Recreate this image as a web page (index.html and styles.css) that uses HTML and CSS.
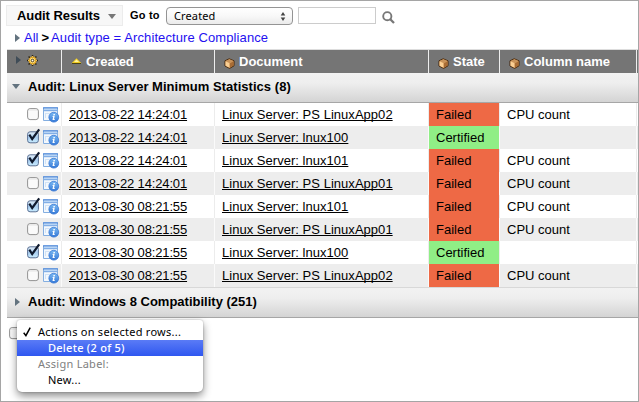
FILE: index.html
```
<!DOCTYPE html>
<html lang="en">
<head>
<meta charset="utf-8">
<title>Audit Results</title>
<link rel="stylesheet" href="styles.css">
</head>
<body>
<svg class="defs" width="0" height="0">
  <defs>
    <linearGradient id="ball" x1="0" y1="0" x2="0" y2="1"><stop offset="0" stop-color="#7dbbf3"/><stop offset="1" stop-color="#3377d6"/></linearGradient>
    <linearGradient id="blue" x1="0" y1="0" x2="0" y2="1"><stop offset="0" stop-color="#e4f0fa"/><stop offset=".5" stop-color="#a9cdf0"/><stop offset="1" stop-color="#c8ecff"/></linearGradient>
  </defs>
  <symbol id="box" viewBox="0 0 11 11"><path d="M5.2.8 10 2.8v5L5.6 10.4 1 8V2.8z" fill="#d9a15f" stroke="#42250c" stroke-width="1"/><path d="M1.5 3 5.5 1.3 9.6 3 5.6 5z" fill="#c9935a"/><path d="M1.5 3.3 5.5 5.2v4.6L1.5 7.8z" fill="#fbcf94"/><path d="M5.8 5.2 9.6 3.3v4.3L5.8 9.8z" fill="#a86c35"/></symbol>
  <symbol id="info" viewBox="0 0 17 16"><path d="M.5 1h14v12.500H.5z" fill="#f3f8fd" stroke="#84aee0"/><path d="M0 .3h15v1.300H0z" fill="#4a86d8"/><path d="M1 1.600h13v1.600H1z" fill="#b8d5f5"/><path d="M1 3.700h13" stroke="#6a9ee0"/><path d="M3 6.500h7M2.500 6v5" stroke="#d0e2f6" fill="none"/><circle cx="10.800" cy="10.200" r="4.900" fill="url(#ball)" stroke="#3b7ad4" stroke-width=".8"/><path d="M10.500 7h1.500l-.3 1.400h-1.500zM9.700 9.100h2l-.6 3h.7l-.2.9H9.500l.6-3h-.6z" fill="#fff"/></symbol>
  <symbol id="off" viewBox="0 0 13 13"><rect x=".6" y=".6" width="10.800" height="11" rx="2.500" fill="#fafafa" stroke="#929292"/><path d="M2 2h8" stroke="#e4e4e4"/></symbol>
  <symbol id="on" viewBox="0 0 13 13"><rect x=".6" y=".8" width="10.800" height="11" rx="2.500" fill="url(#blue)" stroke="#5b7093"/><path d="M2.300 3.600 5.200 8 12.200-1.600" fill="none" stroke="#101a2e" stroke-width="2.200"/></symbol>
</svg>
<main class="frame">
  <header class="toolbar">
    <div class="title"><span>Audit Results</span><i class="down grey"></i></div>
    <label class="goto">Go to</label>
    <div class="select"><span>Created</span>
      <svg width="6" height="9" viewBox="0 0 6 9"><path d="M3 0 5.300 3.500H.7zM3 9 .7 5.500h4.600z" fill="#444"/></svg></div>
    <div class="search"></div>
    <svg class="glass" width="13" height="13" viewBox="0 0 13 13"><circle cx="5.300" cy="5.200" r="4.100" fill="none" stroke="#777" stroke-width="1.900"/><path d="m8.300 8.300 3.700 3.700" stroke="#777" stroke-width="2.300"/></svg>
  </header>
  <nav class="crumbs"><i class="right"></i><a class="all">All</a><b>&gt;</b><a class="filter">Audit type = Architecture Compliance</a></nav>
  <section class="table">
    <div class="row head">
      <div class="tools"><i class="right dark"></i>
        <svg width="11" height="11" viewBox="0 0 11 11"><path d="M5.500 0v11M0 5.500h11M1.600 1.600l7.800 7.800M9.400 1.600 1.600 9.400" stroke="#2a220f" stroke-width="1.400"/><circle cx="5.500" cy="5.500" r="3.300" fill="#ffe07a" stroke="#e0a526" stroke-width="1.300"/><path d="M5.500 1v1M5.500 9v1M1 5.500h1M9 5.500h1" stroke="#f5c650"/><circle cx="5.500" cy="5.500" r="1.300" fill="#fff" stroke="#3a2d12" stroke-width=".9"/></svg></div>
      <div class="created"><svg width="11" height="6" viewBox="0 0 11 6"><path d="M5.500.2 10.500 5.200H.5z" fill="#f0cc20"/><path d="M1 5.500h9" stroke="#4d4415"/><path d="M5.500 1.500 8 4H3z" fill="#fff3a0"/></svg><span>Created</span></div>
      <div><svg class="box"><use href="#box"/></svg><span>Document</span></div>
      <div><svg class="box"><use href="#box"/></svg><span>State</span></div>
      <div><svg class="box"><use href="#box"/></svg><span>Column name</span></div>
      <div></div>
    </div>
    <div class="group"><i class="down"></i><span class="g1">Audit: Linux Server Minimum Statistics (8)</span></div>
    <div class="row"><div class="pick"><svg class="check"><use href="#off"/></svg><svg class="info"><use href="#info"/></svg></div><div><a class="date">2013-08-22 14:24:01</a></div><div><a>Linux Server: PS LinuxApp02</a></div><div class="failed">Failed</div><div>CPU count</div><div></div></div>
    <div class="row"><div class="pick"><svg class="check"><use href="#on"/></svg><svg class="info"><use href="#info"/></svg></div><div><a class="date">2013-08-22 14:24:01</a></div><div><a>Linux Server: lnux100</a></div><div class="certified">Certified</div><div></div><div></div></div>
    <div class="row"><div class="pick"><svg class="check"><use href="#on"/></svg><svg class="info"><use href="#info"/></svg></div><div><a class="date">2013-08-22 14:24:01</a></div><div><a>Linux Server: lnux101</a></div><div class="failed">Failed</div><div>CPU count</div><div></div></div>
    <div class="row"><div class="pick"><svg class="check"><use href="#off"/></svg><svg class="info"><use href="#info"/></svg></div><div><a class="date">2013-08-22 14:24:01</a></div><div><a>Linux Server: PS LinuxApp01</a></div><div class="failed">Failed</div><div>CPU count</div><div></div></div>
    <div class="row"><div class="pick"><svg class="check"><use href="#on"/></svg><svg class="info"><use href="#info"/></svg></div><div><a class="date">2013-08-30 08:21:55</a></div><div><a>Linux Server: lnux101</a></div><div class="failed">Failed</div><div>CPU count</div><div></div></div>
    <div class="row"><div class="pick"><svg class="check"><use href="#off"/></svg><svg class="info"><use href="#info"/></svg></div><div><a class="date">2013-08-30 08:21:55</a></div><div><a>Linux Server: PS LinuxApp01</a></div><div class="failed">Failed</div><div>CPU count</div><div></div></div>
    <div class="row"><div class="pick"><svg class="check"><use href="#on"/></svg><svg class="info"><use href="#info"/></svg></div><div><a class="date">2013-08-30 08:21:55</a></div><div><a>Linux Server: lnux100</a></div><div class="certified">Certified</div><div></div><div></div></div>
    <div class="row"><div class="pick"><svg class="check"><use href="#off"/></svg><svg class="info"><use href="#info"/></svg></div><div><a class="date">2013-08-30 08:21:55</a></div><div><a>Linux Server: PS LinuxApp02</a></div><div class="failed">Failed</div><div>CPU count</div><div></div></div>
    <div class="group last"><i class="right"></i><span class="g2">Audit: Windows 8 Compatibility (251)</span></div>
  </section>
  <footer class="actions">
    <svg class="check"><use href="#off"/></svg>
    <div class="menu">
      <div class="item current"><svg width="8" height="10" viewBox="0 0 8 10"><path d="M.7 5.800 2.900 8.600 7.200.7" fill="none" stroke="#000" stroke-width="1.500"/></svg><span>Actions on selected rows...</span></div>
      <div class="item sub active"><span>Delete (2 of 5)</span></div>
      <div class="item label"><span>Assign Label:</span></div>
      <div class="item sub"><span>New...</span></div>
    </div>
  </footer>
</main>
</body>
</html>
```
FILE: styles.css
```
* { box-sizing: border-box; }
body { margin: 0; background: #fff; color: #000; font: 13px/15px "Liberation Sans", Arial, sans-serif; }
.defs { position: absolute; }
svg { display: block; flex: none; }
svg, symbol { overflow: visible; }
.frame { width: 639px; height: 402px; border: 1px solid #a5a5a5; padding: 4px 0 0 5px; overflow: hidden; }

.toolbar { display: flex; height: 22px; }
.title { width: 117px; height: 21px; display: flex; align-items: center; background: #f7f7f7; border: 1px solid #ececec; padding: 0 0 0 10px; font-weight: bold; letter-spacing: -.07px; }
.title .down { margin: 1px 0 0 8px; }
.goto { font-weight: bold; font-size: 11px; letter-spacing: .2px; margin: 3px 0 0 7px; width: 36px; }
.select { width: 127px; height: 18px; margin-top: 2px; border: 1px solid #949494; border-radius: 4px; background: linear-gradient(#fff, #f8f8f8 50%, #ebebeb); display: flex; align-items: center; justify-content: space-between; padding: 0 6px 0 7px; font: 11px/14px "Noto Sans", sans-serif; letter-spacing: .12px; }
.search { width: 78px; height: 17px; margin: 2px 0 0 5px; border: 1px solid #ccc; }
.glass { margin: 6px 0 0 6px; }

.crumbs { display: flex; align-items: center; height: 22px; padding: 0 0 1px 9px; color: #2410f0; }
.crumbs .all { margin-left: 4px; }
.crumbs b { color: #000; margin: 0 2px 0 3px; }
.crumbs .filter { letter-spacing: .1px; }

.right { border: solid transparent; border-width: 4px 0 4px 5px; border-left-color: #63737f; }
.dark { border-left-color: #3f4c57; }
.down { border: solid transparent; border-width: 5px 4px 0; border-top-color: #63737f; }
.down.grey { border-top-color: #777; }

.table { margin-left: 1px; border-top: 1px solid #ddd; }
.row { display: grid; grid-template-columns: 54px 153px 214px 71px 137px 2px; height: 23px; }
.row > div { border-left: 1px solid #ececec; padding: 0 0 0 7px; display: flex; align-items: center; white-space: nowrap; }
.row > div:first-child { border-left: 0; }
.row > div:last-child { padding: 0; }
.row:nth-child(even) { background: #ededed; }
.row:nth-child(even) > div { border-left-color: #fafafa; }
.row > .failed { background: #ee6945; background-clip: padding-box; }
.row > .certified { background: #90ee86; background-clip: padding-box; }
.row.head { background: #757575; color: #fff; font-weight: bold; }
.row.head > div { border-left: 1px solid #eee; padding-left: 8px; }
.row.head > div:last-child { padding: 0; }
.row.head > .tools { border: 0; padding: 0 0 3px 9px; gap: 6px; }
.head span { margin-left: 4px; }
.head .created span { letter-spacing: -.1px; }
.head .box { margin: 3px 0 0 1px; }
.box { width: 11px; height: 11px; }
.created svg { margin: 0 0 1px 1px; }
.row a { text-decoration: underline; text-decoration-thickness: 1px; text-underline-offset: 1px; text-decoration-skip-ink: none; letter-spacing: .03px; }
.row .date { letter-spacing: -.14px; }
.row > .pick { padding: 1px 0 0 20px; gap: 3px; }
.check { width: 13px; height: 13px; }
.pick .check { margin-bottom: 1px; }
.info { width: 17px; height: 16px; }

.group { height: 30px; border-bottom: 1px solid #a6a6a6; background: linear-gradient(#f2f2f2, #eee 35%, #d4d4d4); display: flex; align-items: center; padding: 0 0 2px 5px; font-weight: bold; }
.group span { margin-left: 8px; }
.group .g1 { letter-spacing: .03px; }
.group.last { height: 31px; border-top: 1px solid #d8d8d8; padding-left: 8px; }

.actions { padding: 9px 0 0 3px; position: relative; }
.menu { position: absolute; left: 11px; top: 2px; width: 186px; height: 72px; padding-top: 4px; background: #fff; border-radius: 3px 3px 5px 5px; box-shadow: 0 4px 9px rgba(0,0,0,.45), 0 0 2px rgba(0,0,0,.3); font: 11px/16px "Noto Sans", sans-serif; letter-spacing: .26px; }
.item { height: 16px; padding-left: 21px; display: flex; align-items: center; }
.item.current { padding-left: 6px; gap: 7px; }
.item.sub { padding-left: 31px; }
.item.active { color: #fff; background: linear-gradient(#5a7bf6, #2f57f0); font-weight: 500; }
.item.label { color: #808080; }
```
